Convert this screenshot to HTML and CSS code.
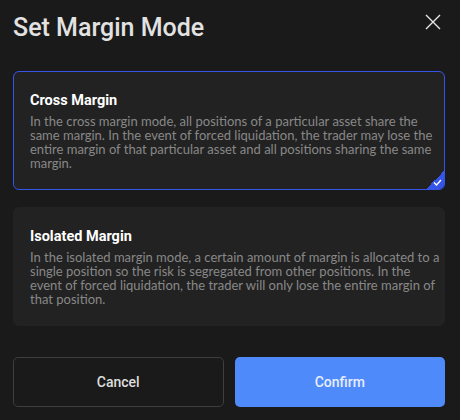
FILE: index.html
```html
<!DOCTYPE html>
<html lang="en">
<head>
  <meta charset="UTF-8">
  <meta name="viewport" content="width=device-width, initial-scale=1.0">
  <title>Set Margin Mode</title>
  <link rel="stylesheet" href="styles.css">
</head>
<body>
  <div class="dialog">
    <div class="header">
      <h1>Set Margin Mode</h1>
      <button class="close" aria-label="Close">
        <svg width="16" height="16" viewBox="0 0 16 16"><path d="M1 1L15 15M15 1L1 15" stroke="#e6e6e6" stroke-width="1.4" fill="none"/></svg>
      </button>
    </div>

    <div class="option selected">
      <h2>Cross Margin</h2>
      <p>In the cross margin mode, all positions of a particular asset share the same margin. In the event of forced liquidation, the trader may lose the entire margin of that particular asset and all positions sharing the same margin.</p>
      <span class="check">
        <svg width="9" height="7" viewBox="0 0 9 7"><path d="M1 3.5L3.5 6L8 1" stroke="#fff" stroke-width="1.4" fill="none"/></svg>
      </span>
    </div>

    <div class="option">
      <h2>Isolated Margin</h2>
      <p>In the isolated margin mode, a certain amount of margin is allocated to a single position so the risk is segregated from other positions. In the event of forced liquidation, the trader will only lose the entire margin of that position.</p>
    </div>

    <div class="actions">
      <button class="btn cancel">Cancel</button>
      <button class="btn confirm">Confirm</button>
    </div>
  </div>
</body>
</html>
```

FILE: styles.css
```css
body {
  margin: 0;
  background-color: #1a1a1a;
  font-family: Roboto, Arial, sans-serif;
}
.dialog {
  padding: 0 15px 0 13px;
}
.header {
  display: flex;
  justify-content: space-between;
  align-items: flex-start;
  height: 71px;
}
.header h1 {
  margin: 13px 0 0;
  font-size: 25px;
  font-weight: 500;
  color: #e2e2e2;
  line-height: 30px;
}
.close {
  background: none;
  border: none;
  padding: 0;
  margin: 14px 4px 0 0;
  cursor: pointer;
}
.option {
  position: relative;
  background-color: #222222;
  border: 1px solid #222222;
  border-radius: 6px;
  padding: 19px 1.5px 19px 16px;
  margin-bottom: 17px;
  overflow: hidden;
}
.option.selected {
  border-color: #3455e8;
}
.option h2 {
  margin: 0 0 4px;
  font-size: 14.5px;
  font-weight: 700;
  color: #ffffff;
  line-height: 19px;
}
.option p {
  margin: 0;
  font-family: Lato, Roboto, sans-serif;
  font-size: 13px;
  line-height: 14px;
  color: #888888;
}
.check {
  position: absolute;
  right: 0;
  bottom: 0;
  width: 18px;
  height: 18px;
  background: linear-gradient(135deg, transparent 50%, #3455e8 50%);
}
.check svg {
  position: absolute;
  right: 2px;
  bottom: 3px;
}
.actions {
  display: grid;
  grid-template-columns: 1fr 1fr;
  gap: 11px;
  margin-top: 31px;
}
.btn {
  height: 50px;
  border-radius: 5px;
  font-family: inherit;
  font-size: 14px;
  font-weight: 500;
  cursor: pointer;
}
.cancel {
  background: transparent;
  border: 1px solid #3e3e3e;
  color: #dedede;
}
.confirm {
  background-color: #4f8afb;
  border: none;
  color: #e6edfc;
}
```
